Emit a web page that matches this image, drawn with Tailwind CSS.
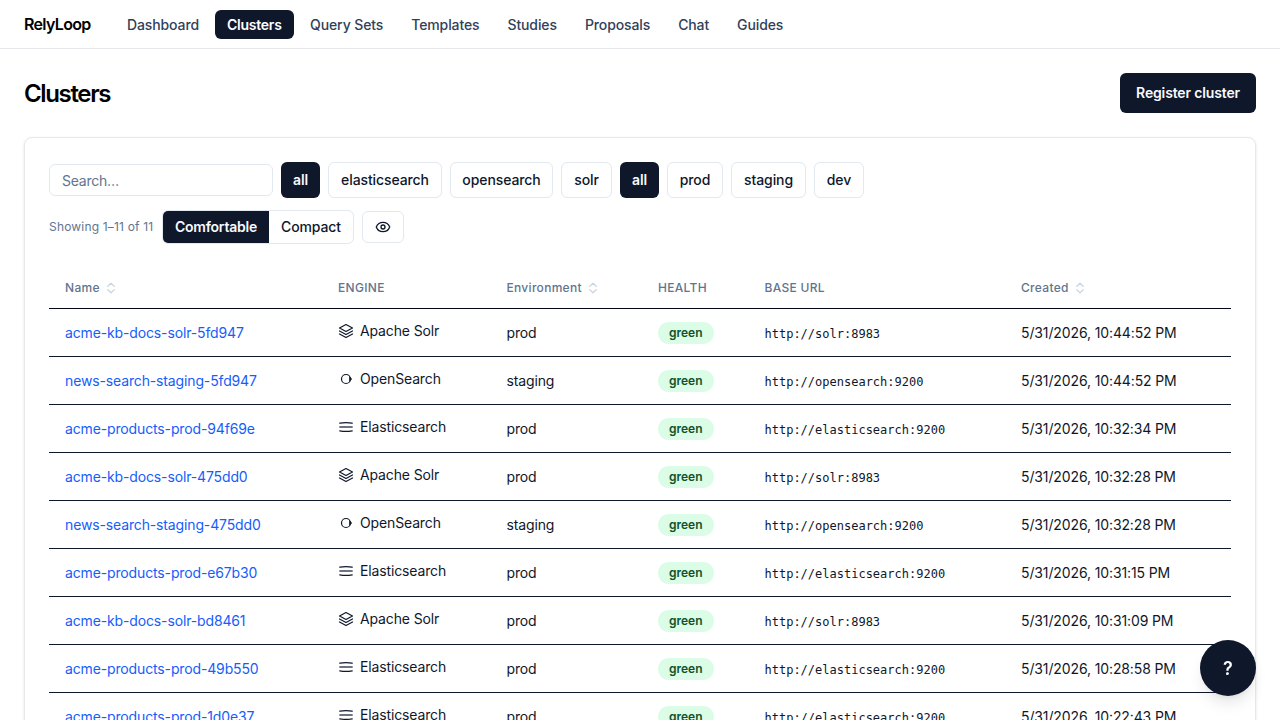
<!DOCTYPE html>
<html lang="en">
<head>
<meta charset="utf-8">
<title>RelyLoop – Clusters</title>
<script src="https://cdn.jsdelivr.net/npm/@tailwindcss/browser@4"></script>
</head>
<body class="h-[720px] overflow-hidden bg-white font-['Inter',sans-serif] text-black">
<svg class="hidden">
  <symbol id="sort" viewBox="0 0 12 12" fill="none" stroke="currentColor" stroke-width="1.3" stroke-linecap="round" stroke-linejoin="round"><path d="M2.8 4.2 6 1.3 9.2 4.2"/><path d="M2.8 7.8 6 10.7 9.2 7.8"/></symbol>
  <symbol id="solr" viewBox="0 0 16 16" fill="none" stroke="currentColor" stroke-width="1.2" stroke-linecap="round" stroke-linejoin="round"><path d="M8 1.5 14.5 5 8 8.5 1.5 5Z"/><path d="M1.5 8 8 11.5 14.5 8"/><path d="M1.5 11 8 14.5 14.5 11"/></symbol>
  <symbol id="open" viewBox="0 0 16 16" fill="none" stroke="currentColor" stroke-width="1.2"><circle cx="8" cy="8" r="4.5"/><path d="M11.2 5 14.1 8l-2.9 3Z" fill="currentColor" stroke="none"/></symbol>
  <symbol id="elastic" viewBox="0 0 16 16" fill="none" stroke="currentColor" stroke-width="1.3" stroke-linecap="round"><path d="M1.8 4.2Q8 3 14.2 4.2"/><path d="M1.8 8h12.4" stroke-opacity=".8"/><path d="M1.8 11.8Q8 13 14.2 11.8"/></symbol>
</svg>
<header class="flex h-[49px] items-center border-b border-gray-200 px-6">
  <a class="w-[91px] text-base font-semibold tracking-[-0.67px]">RelyLoop</a>
  <nav class="flex gap-1 text-sm font-medium tracking-[-0.11px] text-slate-700 [&>a]:flex [&>a]:h-[29px] [&>a]:items-center [&>a]:rounded-md [&>a]:px-3 [&>a]:pt-px">
    <a>Dashboard</a><a class="w-[79px] bg-slate-900 font-semibold tracking-[-0.25px] text-white">Clusters</a><a>Query Sets</a><a>Templates</a><a>Studies</a><a>Proposals</a><a>Chat</a><a>Guides</a>
  </nav>
</header>
<main class="px-6 pt-6">
  <div class="flex h-10 items-center justify-between">
    <h1 class="pt-0.5 text-2xl font-semibold tracking-[-1.35px]">Clusters</h1>
    <button class="h-10 w-[136px] rounded-md bg-slate-900 text-sm font-semibold tracking-[-0.15px] text-slate-50">Register cluster</button>
  </div>
  <section class="mt-6 h-[700px] rounded-lg border border-gray-200 p-6 text-slate-900 shadow-sm">
    <div class="flex items-center gap-2 text-sm font-medium tracking-[-0.1px] [&>button]:h-9 [&>button]:rounded-md">
      <input placeholder="Search…" class="h-8 w-56 rounded-md border border-slate-200 px-3 font-normal tracking-[-0.25px] placeholder:text-slate-500">
      <button class="w-[39px] bg-slate-900 font-semibold text-slate-50">all</button>
      <button class="w-[114px] border border-slate-200">elasticsearch</button>
      <button class="w-[103px] border border-slate-200">opensearch</button>
      <button class="w-[51px] border border-slate-200">solr</button>
      <button class="w-[39px] bg-slate-900 font-semibold text-slate-50">all</button>
      <button class="w-14 border border-slate-200">prod</button>
      <button class="w-[75px] border border-slate-200">staging</button>
      <button class="w-[50px] border border-slate-200">dev</button>
    </div>
    <div class="mt-3 flex items-center gap-2 text-sm font-medium tracking-[-0.1px]">
      <span class="w-[105px] text-xs font-normal tracking-[0.18px] whitespace-nowrap text-slate-500">Showing 1–11 of 11</span>
      <div class="flex h-[34px] w-[192px] overflow-hidden rounded-md border border-slate-200">
        <button class="w-[106px] bg-slate-900 font-semibold tracking-[-0.22px] text-slate-50">Comfortable</button><button class="flex-1">Compact</button>
      </div>
      <button class="flex h-8 w-[42px] items-center justify-center rounded-md border border-slate-200">
        <svg class="size-4" viewBox="0 0 24 24" fill="none" stroke="currentColor" stroke-width="2" stroke-linecap="round" stroke-linejoin="round"><path d="M2.06 12.35a1 1 0 0 1 0-.7 10.75 10.75 0 0 1 19.88 0 1 1 0 0 1 0 .7 10.75 10.75 0 0 1-19.88 0"/><circle cx="12" cy="12" r="3"/></svg>
      </button>
    </div>
    <table class="mt-6 w-full table-fixed text-left text-sm">
      <colgroup><col class="w-[273px]"><col class="w-[168.5px]"><col class="w-[151.5px]"><col class="w-[106.5px]"><col class="w-[256.5px]"><col></colgroup>
      <thead class="text-xs tracking-wide text-slate-500">
        <tr class="h-10 border-b border-slate-950 [&>th]:px-4 [&>th]:font-medium">
          <th><span class="flex items-center gap-[5px]">Name <svg class="size-3 text-slate-300"><use href="#sort"/></svg></span></th>
          <th>ENGINE</th>
          <th><span class="flex items-center gap-[5px]">Environment <svg class="size-3 text-slate-300"><use href="#sort"/></svg></span></th>
          <th>HEALTH</th><th>BASE URL</th>
          <th><span class="flex items-center gap-[5px]">Created <svg class="size-3 text-slate-300"><use href="#sort"/></svg></span></th>
        </tr>
      </thead>
      <tbody id="rows"></tbody>
    </table>
  </section>
</main>
<button class="fixed right-6 bottom-6 size-14 rounded-full bg-slate-900 pt-px text-lg font-semibold text-slate-50 shadow-lg">?</button>
<script>
const engines = {
  solr: ['Apache Solr', 'prod', 'http://solr:8983'],
  open: ['OpenSearch', 'staging', 'http://opensearch:9200'],
  elastic: ['Elasticsearch', 'prod', 'http://elasticsearch:9200']
};
const clusters = [
  ['acme-kb-docs-solr-5fd947', 'solr', '10:44:52'],
  ['news-search-staging-5fd947', 'open', '10:44:52'],
  ['acme-products-prod-94f69e', 'elastic', '10:32:34'],
  ['acme-kb-docs-solr-475dd0', 'solr', '10:32:28'],
  ['news-search-staging-475dd0', 'open', '10:32:28'],
  ['acme-products-prod-e67b30', 'elastic', '10:31:15'],
  ['acme-kb-docs-solr-bd8461', 'solr', '10:31:09'],
  ['acme-products-prod-49b550', 'elastic', '10:28:58'],
  ['acme-products-prod-1d0e37', 'elastic', '10:22:43']
];
document.getElementById('rows').innerHTML = clusters.map(([name, kind, time]) => {
  const [engine, env, url] = engines[kind];
  return `<tr class="h-12 border-b border-slate-900 tracking-[-0.14px] [&>td]:px-4 [&>td]:pt-0.5 [&>td]:pb-0">
    <td><a class="text-blue-600">${name}</a></td>
    <td><span class="mb-1 flex items-center gap-1.5"><svg class="size-4"><use href="#${kind}"/></svg>${engine}</span></td>
    <td>${env}</td>
    <td><span class="inline-flex h-[22px] items-center rounded-full bg-green-100 px-[11px] text-xs font-semibold tracking-normal text-green-900">green</span></td>
    <td class="font-['DejaVu_Sans_Mono',monospace] text-xs tracking-normal"><span class="block pt-0.5">${url}</span></td>
    <td class="tracking-[-0.12px]">5/31/2026, ${time} PM</td></tr>`;
}).join('');
</script>
</body>
</html>
